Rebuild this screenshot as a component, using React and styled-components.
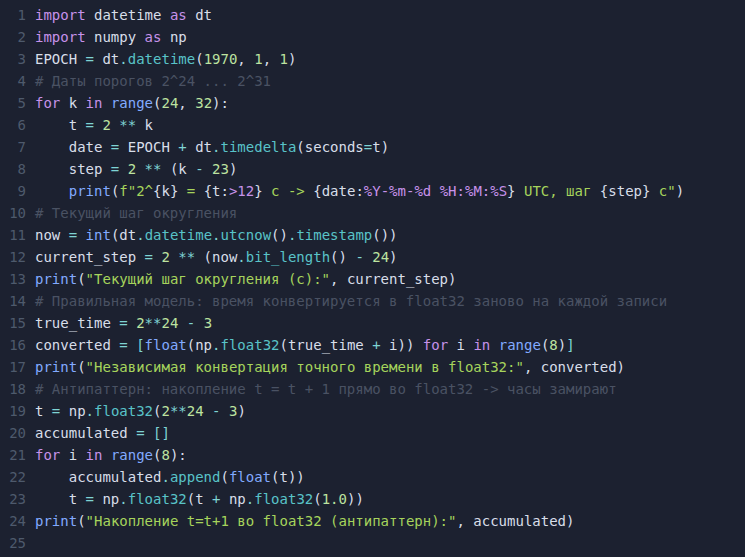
import React from "react";
import styled, { createGlobalStyle } from "styled-components";

const GlobalStyle = createGlobalStyle`
    html, body {
        margin: 0;
        padding: 0;
        background: #1c2130;
    }
`;

const Editor = styled.div`
    width: 745px;
    height: 557px;
    box-sizing: border-box;
    padding-top: 4px;
    background: #1c2130;
    font-family: "DejaVu Sans Mono", monospace;
    font-size: 14px;
    overflow: hidden;
`;

const Line = styled.div`
    display: flex;
    height: 22px;
    line-height: 22px;
    white-space: pre;
`;

const Gutter = styled.span`
    width: 26px;
    text-align: right;
    color: #4e5a6c;
    margin-right: 9px;
    flex-shrink: 0;
`;

const Code = styled.span`
    color: #d8dee9;
`;

const colors = {
    k: "#c792ea",
    f: "#82aaff",
    a: "#59c3c8",
    o: "#7fd4d4",
    n: "#bde3a0",
    s: "#a6d45c",
    c: "#4a5263",
    p: "#c792ea",
};

const Tok = styled.span`
    color: ${(p) => colors[p.$t] || "#d8dee9"};
`;

// each line: list of [type, text]
const lines = [
    [["k", "import"], ["", " datetime "], ["k", "as"], ["", " dt"]],
    [["k", "import"], ["", " numpy "], ["k", "as"], ["", " np"]],
    [["", "EPOCH "], ["o", "="], ["", " dt"], ["o", "."], ["a", "datetime"], ["", "("], ["n", "1970"], ["", ", "], ["n", "1"], ["", ", "], ["n", "1"], ["", ")"]],
    [["c", "# Даты порогов 2^24 ... 2^31"]],
    [["k", "for"], ["", " k "], ["k", "in"], ["", " "], ["f", "range"], ["", "("], ["n", "24"], ["", ", "], ["n", "32"], ["", "):"]],
    [["", "    t "], ["o", "="], ["", " "], ["n", "2"], ["", " "], ["o", "**"], ["", " k"]],
    [["", "    date "], ["o", "="], ["", " EPOCH "], ["o", "+"], ["", " dt"], ["o", "."], ["a", "timedelta"], ["", "(seconds"], ["o", "="], ["", "t)"]],
    [["", "    step "], ["o", "="], ["", " "], ["n", "2"], ["", " "], ["o", "**"], ["", " (k "], ["o", "-"], ["", " "], ["n", "23"], ["", ")"]],
    [["", "    "], ["f", "print"], ["", "("], ["s", "f\"2^"], ["", "{k}"], ["s", " = "], ["", "{t:"], ["p", ">12"], ["", "}"], ["s", " c -> "], ["", "{date:"], ["p", "%Y-%m-%d %H:%M:%S"], ["", "}"], ["s", " UTC, шаг "], ["", "{step}"], ["s", " c\""], ["", ")"]],
    [["c", "# Текущий шаг округления"]],
    [["", "now "], ["o", "="], ["", " "], ["f", "int"], ["", "(dt"], ["o", "."], ["a", "datetime"], ["o", "."], ["a", "utcnow"], ["", "()"], ["o", "."], ["a", "timestamp"], ["", "())"]],
    [["", "current_step "], ["o", "="], ["", " "], ["n", "2"], ["", " "], ["o", "**"], ["", " (now"], ["o", "."], ["a", "bit_length"], ["", "() "], ["o", "-"], ["", " "], ["n", "24"], ["", ")"]],
    [["f", "print"], ["", "("], ["s", "\"Текущий шаг округления (с):\""], ["", ", current_step)"]],
    [["c", "# Правильная модель: время конвертируется в float32 заново на каждой записи"]],
    [["", "true_time "], ["o", "="], ["", " "], ["n", "2"], ["o", "**"], ["n", "24"], ["", " "], ["o", "-"], ["", " "], ["n", "3"]],
    [["", "converted "], ["o", "="], ["", " "], ["o", "["], ["f", "float"], ["", "(np"], ["o", "."], ["a", "float32"], ["", "(true_time "], ["o", "+"], ["", " i)) "], ["k", "for"], ["", " i "], ["k", "in"], ["", " "], ["f", "range"], ["", "("], ["n", "8"], ["", ")"], ["o", "]"]],
    [["f", "print"], ["", "("], ["s", "\"Независимая конвертация точного времени в float32:\""], ["", ", converted)"]],
    [["c", "# Антипаттерн: накопление t = t + 1 прямо во float32 -> часы замирают"]],
    [["", "t "], ["o", "="], ["", " np"], ["o", "."], ["a", "float32"], ["", "("], ["n", "2"], ["o", "**"], ["n", "24"], ["", " "], ["o", "-"], ["", " "], ["n", "3"], ["", ")"]],
    [["", "accumulated "], ["o", "="], ["", " "], ["o", "[]"]],
    [["k", "for"], ["", " i "], ["k", "in"], ["", " "], ["f", "range"], ["", "("], ["n", "8"], ["", "):"]],
    [["", "    accumulated"], ["o", "."], ["a", "append"], ["", "("], ["f", "float"], ["", "(t))"]],
    [["", "    t "], ["o", "="], ["", " np"], ["o", "."], ["a", "float32"], ["", "(t "], ["o", "+"], ["", " np"], ["o", "."], ["a", "float32"], ["", "("], ["n", "1.0"], ["", "))"]],
    [["f", "print"], ["", "("], ["s", "\"Накопление t=t+1 во float32 (антипаттерн):\""], ["", ", accumulated)"]],
    [],
];

const App = () => (
    <>
        <GlobalStyle />
        <Editor>
            {lines.map((tokens, i) => (
                <Line key={i}>
                    <Gutter>{i + 1}</Gutter>
                    <Code>
                        {tokens.map(([t, text], j) => (
                            <Tok key={j} $t={t}>{text}</Tok>
                        ))}
                    </Code>
                </Line>
            ))}
        </Editor>
    </>
);

export default App;
